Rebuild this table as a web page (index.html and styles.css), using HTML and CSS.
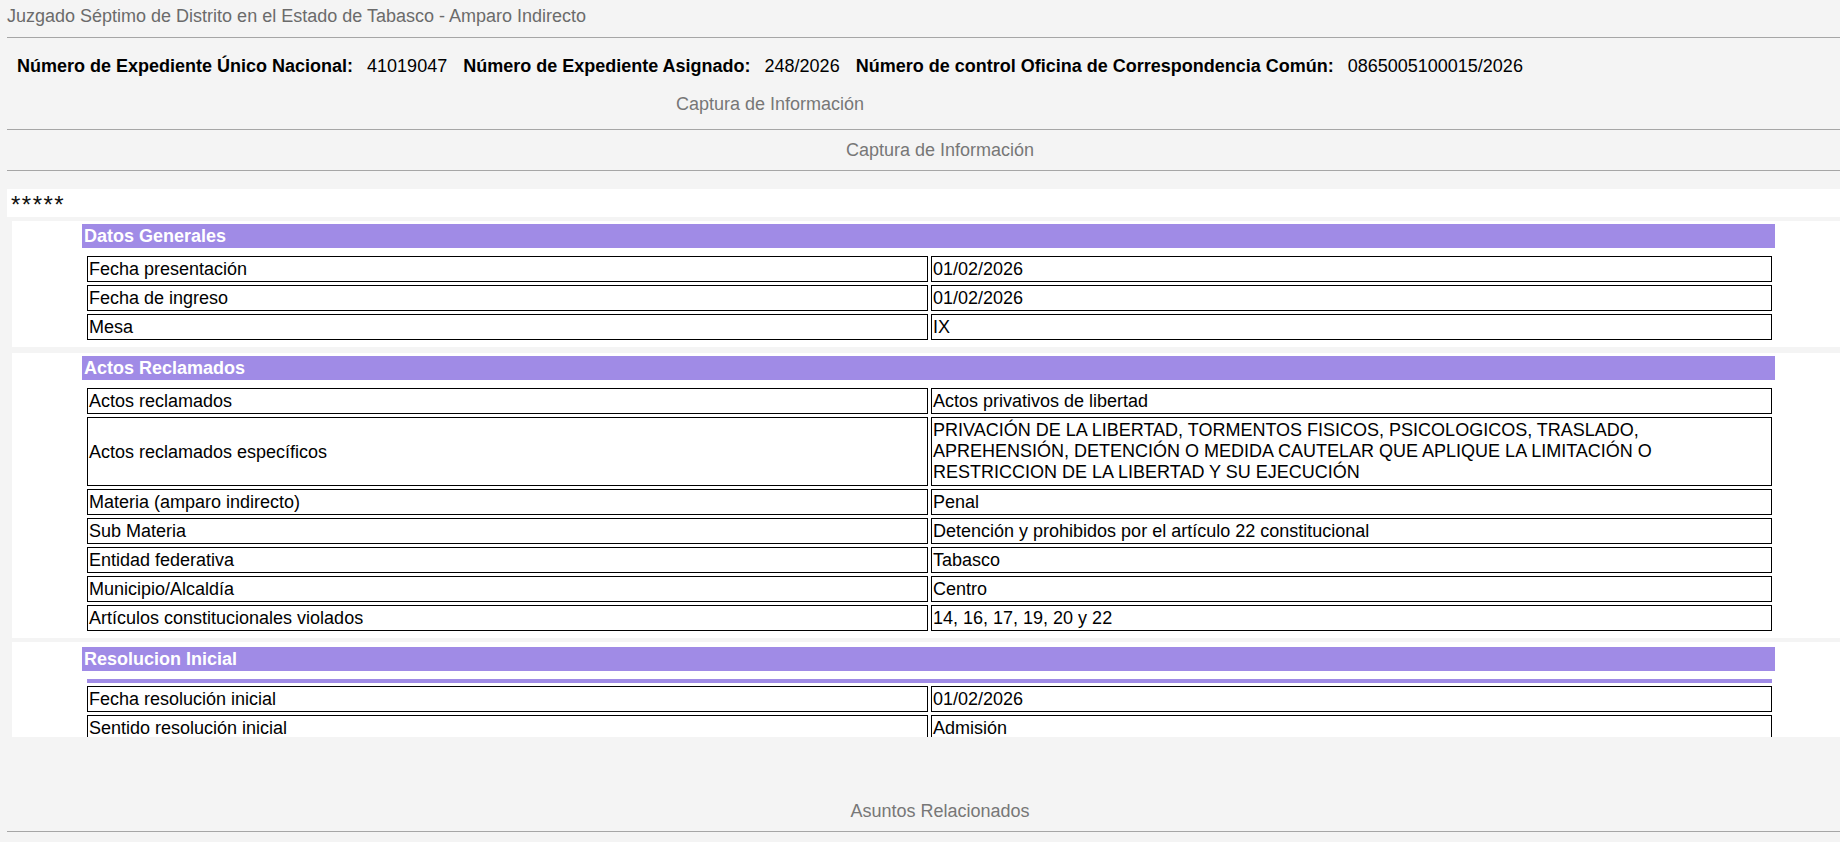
FILE: index.html
```html
<!DOCTYPE html>
<html lang="es">
<head>
<meta charset="utf-8">
<title>Amparo Indirecto</title>
<link rel="stylesheet" href="styles.css">
</head>
<body>
<div class="page">
  <div class="title">Juzgado Séptimo de Distrito en el Estado de Tabasco - Amparo Indirecto</div>
  <div class="rule rule-top"></div>
  <div class="info">
    <span class="lbl">Número de Expediente Único Nacional:</span><span class="val">41019047</span><span class="lbl">Número de Expediente Asignado:</span><span class="val">248/2026</span><span class="lbl">Número de control Oficina de Correspondencia Común:</span><span class="val">0865005100015/2026</span>
  </div>
  <div class="cap-a">Captura de Información</div>
  <div class="rule rule-a"></div>
  <div class="cap-b">Captura de Información</div>
  <div class="rule rule-b"></div>
  <div class="strip"><span class="stars">*****</span></div>

  <section class="panel">
    <div class="sec-head">Datos Generales</div>
    <table class="grid">
      <tr><td>Fecha presentación</td><td>01/02/2026</td></tr>
      <tr><td>Fecha de ingreso</td><td>01/02/2026</td></tr>
      <tr><td>Mesa</td><td>IX</td></tr>
    </table>
  </section>

  <section class="panel panel-2">
    <div class="sec-head">Actos Reclamados</div>
    <table class="grid">
      <tr><td>Actos reclamados</td><td>Actos privativos de libertad</td></tr>
      <tr><td>Actos reclamados específicos</td><td class="multi">PRIVACIÓN DE LA LIBERTAD, TORMENTOS FISICOS, PSICOLOGICOS, TRASLADO,<br>APREHENSIÓN, DETENCIÓN O MEDIDA CAUTELAR QUE APLIQUE LA LIMITACIÓN O<br>RESTRICCION DE LA LIBERTAD Y SU EJECUCIÓN</td></tr>
      <tr><td>Materia (amparo indirecto)</td><td>Penal</td></tr>
      <tr><td>Sub Materia</td><td>Detención y prohibidos por el artículo 22 constitucional</td></tr>
      <tr><td>Entidad federativa</td><td>Tabasco</td></tr>
      <tr><td>Municipio/Alcaldía</td><td>Centro</td></tr>
      <tr><td>Artículos constitucionales violados</td><td>14, 16, 17, 19, 20 y 22</td></tr>
    </table>
  </section>

  <section class="panel panel-3">
    <div class="sec-head">Resolucion Inicial</div>
    <table class="grid">
      <tr><td class="bar" colspan="2"></td></tr>
      <tr><td>Fecha resolución inicial</td><td>01/02/2026</td></tr>
      <tr><td>Sentido resolución inicial</td><td>Admisión</td></tr>
    </table>
  </section>

  <div class="cap-c">Asuntos Relacionados</div>
  <div class="rule rule-c"></div>
</div>
</body>
</html>
```

FILE: styles.css
```css
html, body {
  margin: 0;
  padding: 0;
  background: #f4f4f4;
}

body {
  font-family: "Liberation Sans", Arial, sans-serif;
  font-size: 18px;
  color: #000;
}

.page {
  padding: 6px 0 0 7px;
}

.title {
  color: #6b6b6b;
  line-height: 21px;
}

.rule {
  height: 0;
  border-top: 1px solid #a6a6a6;
}

.rule-top { margin-top: 10px; }

.info {
  margin-top: 18px;
  padding-left: 10px;
  line-height: 21px;
  white-space: nowrap;
}

.lbl {
  font-weight: bold;
}

.val {
  margin: 0 16px 0 14px;
}

.cap-a {
  margin-top: 17px;
  width: 1526px;
  text-align: center;
  color: #777;
  line-height: 21px;
}

.rule-a { margin-top: 14px; }

.cap-b {
  margin-top: 10px;
  padding-left: 33px;
  text-align: center;
  color: #777;
  line-height: 21px;
}

.rule-b { margin-top: 9px; }

.strip {
  margin-top: 18px;
  height: 28px;
  background: #fff;
  padding-left: 4px;
  box-sizing: border-box;
  padding-top: 3px;
  line-height: 25px;
}

.stars {
  font-size: 24px;
  letter-spacing: 1.5px;
  color: #111;
}

.panel {
  margin: 4px 0 0 5px;
  background: #fff;
  padding: 3px 0 4px 70px;
}

.panel-2 { margin-top: 6px; }

.panel-3 {
  margin-top: 4px;
  padding-top: 5px;
  padding-bottom: 0;
  height: 90px;
  overflow: hidden;
}

.sec-head {
  width: 1693px;
  height: 24px;
  line-height: 24px;
  background: #a08be6;
  color: #fff;
  font-weight: bold;
  padding-left: 2px;
  box-sizing: border-box;
}

.grid {
  margin: 5px 0 0 2px;
  width: 1691px;
  table-layout: fixed;
  border-collapse: separate;
  border-spacing: 3px;
}

.grid td {
  border: 1px solid #000;
  padding: 2px 1px;
  line-height: 20px;
  vertical-align: middle;
  width: 50%;
}

.grid td.multi {
  line-height: 21px;
}

.grid td.bar {
  border: 0;
  padding: 0;
  height: 4px;
  line-height: 0;
  background: #a08be6;
}

.cap-c {
  margin-top: 64px;
  padding-left: 33px;
  text-align: center;
  color: #777;
  line-height: 21px;
}

.rule-c { margin-top: 9px; }
```
